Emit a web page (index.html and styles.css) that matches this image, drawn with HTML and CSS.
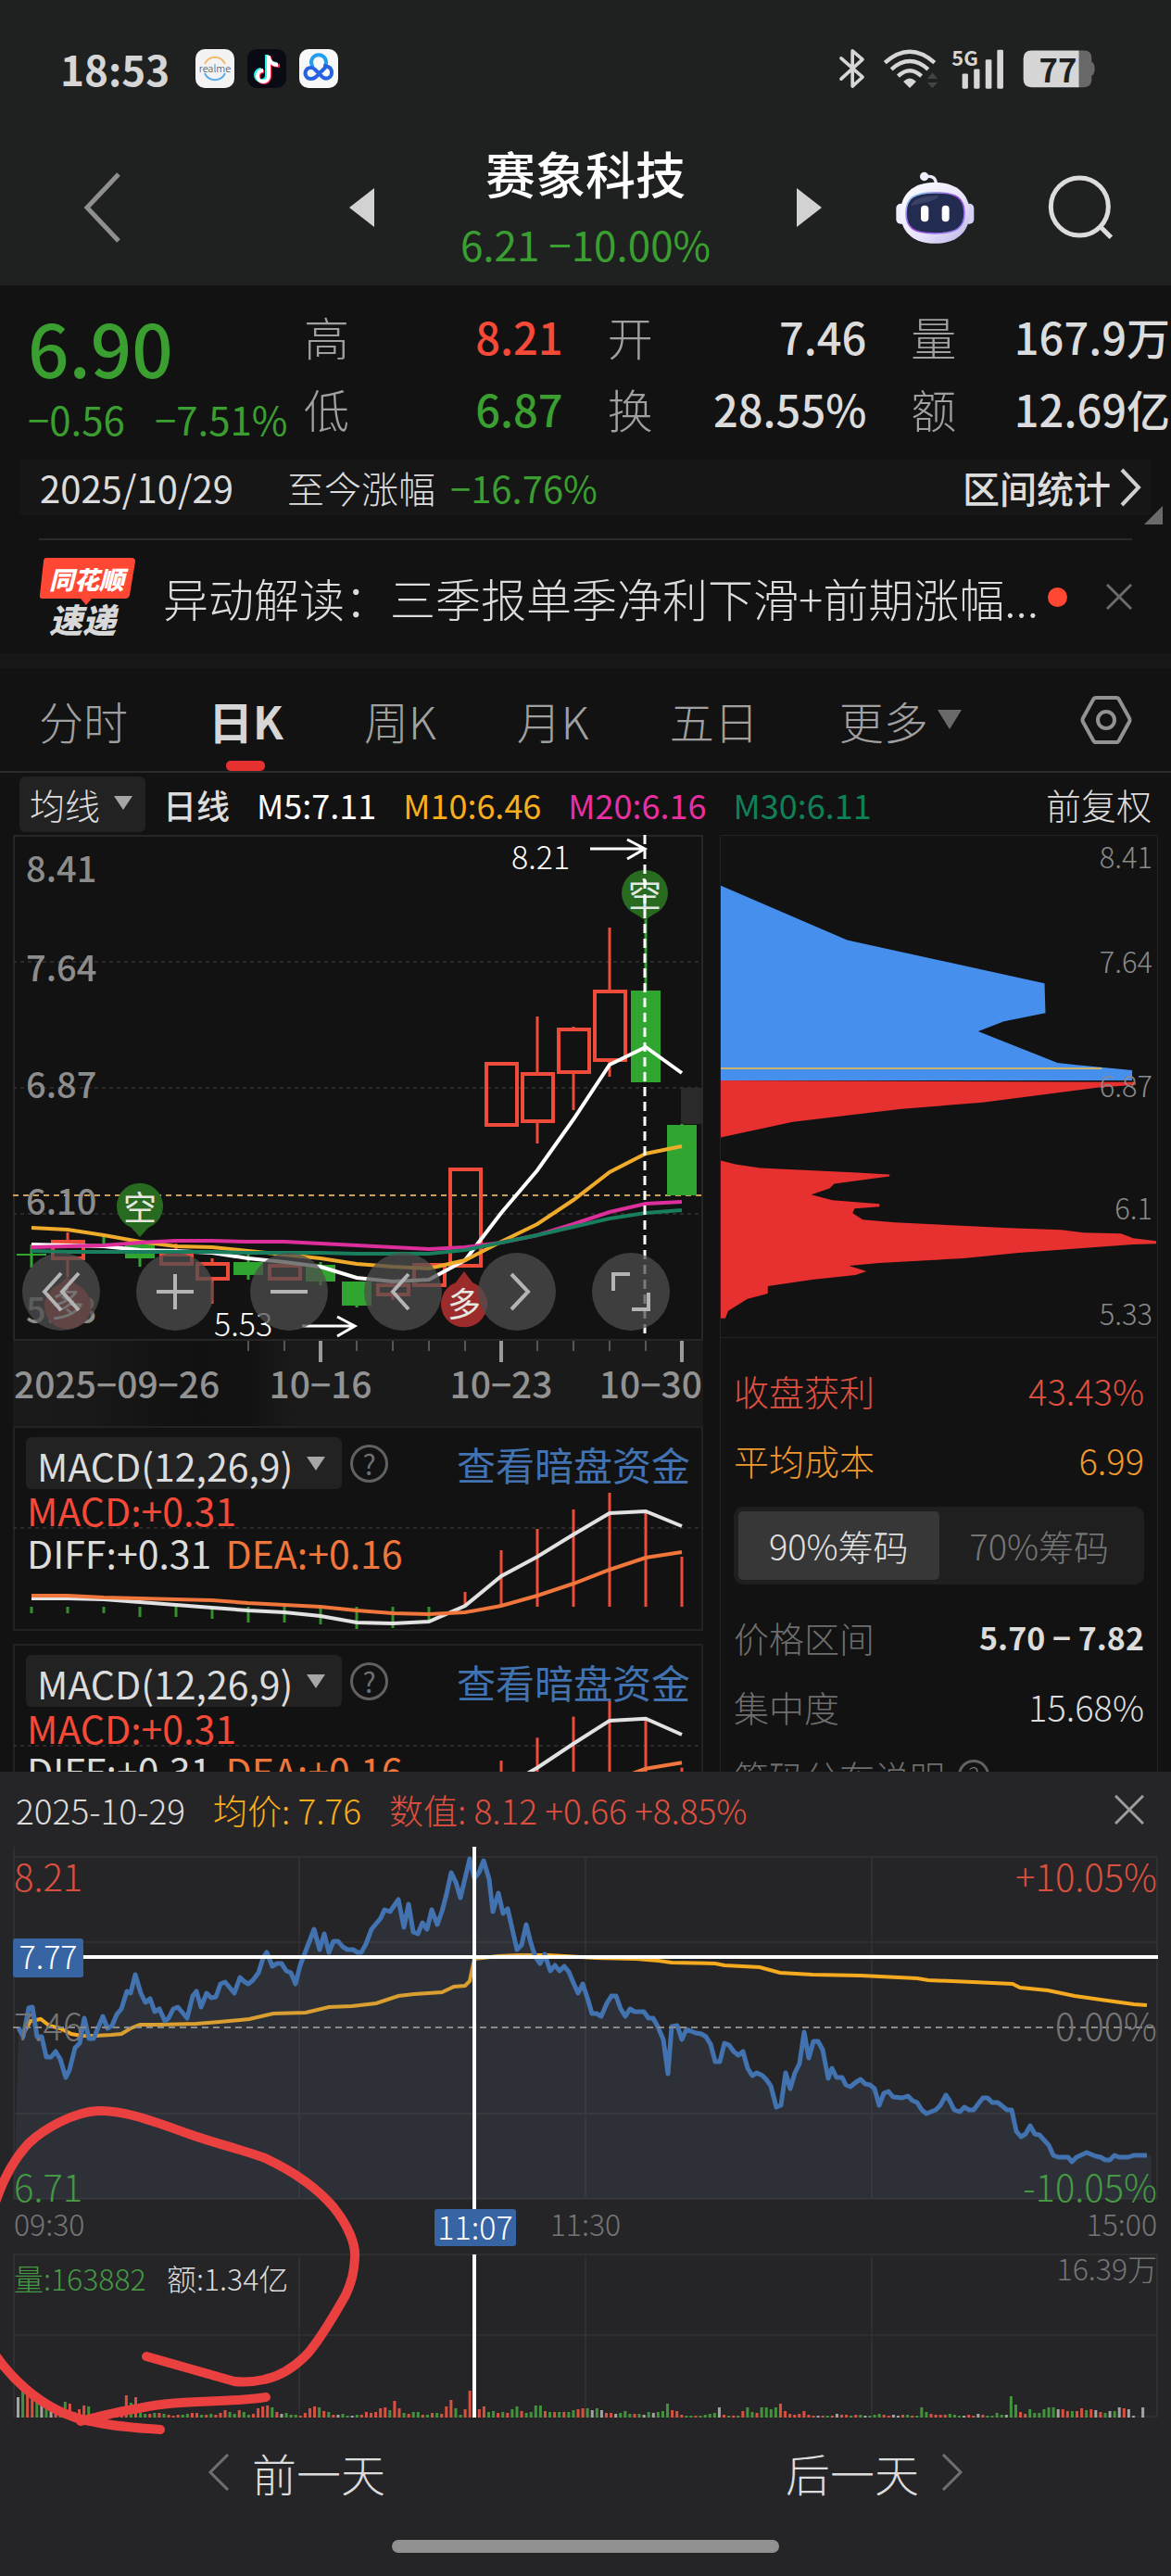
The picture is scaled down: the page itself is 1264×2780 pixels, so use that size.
FILE: index.html
```html
<!DOCTYPE html>
<html lang="zh-CN">
<head>
    <meta charset="UTF-8">
    <meta name="viewport" content="width=device-width, initial-scale=1.0">
    <title>赛象科技</title>
    <link rel="stylesheet" href="styles.css">
</head>
<body>
    <header class="top">
        <div class="status">
            <span class="clock">18:53</span>
            <svg class="app" viewBox="0 0 42 42">
                <rect width="42" height="42" rx="10" fill="#f3f3f3"/>
                <path d="M10 16a12 12 0 0 1 22 0" fill="none" stroke="#f0bd72" stroke-width="2"/>
                <path d="M10 26a12 12 0 0 0 22 0" fill="none" stroke="#62aee8" stroke-width="2"/>
                <text x="21" y="25" class="app-text">realme</text>
            </svg>
            <svg class="app" viewBox="0 0 42 42">
                <rect width="42" height="42" rx="10" fill="#0a0a14"/>
                <g fill="none" stroke-width="4">
                    <path d="M21 6v22a6 6 0 1 1-6-6M21 8c1 5 5 8 11 8" stroke="#25f4ee"/>
                    <path d="M24 8v22a6 6 0 1 1-6-6M24 10c1 5 5 8 11 8" stroke="#fe2c55"/>
                    <path d="M23 7v22a6 6 0 1 1-6-6M23 9c1 5 5 8 10 8" stroke="#fff"/>
                </g>
            </svg>
            <svg class="app" viewBox="0 0 42 42">
                <rect width="42" height="42" rx="10" fill="#f8f8f8"/>
                <g fill="none" stroke-width="4" stroke-linecap="round">
                    <path d="M14 18a8 8 0 1 1 14 0" stroke="#22a0ee"/>
                    <path d="M28 18c5 1 7 4 7 7a6 6 0 0 1-10 5l-8-8a6 6 0 1 0-4 10c3 0 4-1 5-2l10-10" stroke="#2563e0"/>
                </g>
            </svg>
            <span class="spacer"></span>
            <svg width="27" height="44" viewBox="46 36 82 132">
                <path d="M52 68l70 62-33 30V44l33 28-70 64" fill="none" stroke="#d5d6d5" stroke-width="11" stroke-linejoin="round" stroke-linecap="round"/>
            </svg>
            <svg class="wifi" width="60" height="43" viewBox="184 36 180 130">
                <g fill="none" stroke="#d5d6d5" stroke-width="13">
                    <path d="M190 80q81-72 162 0"/>
                    <path d="M211 102q60-53 120 0"/>
                    <path d="M233 124q38-36 76 0"/>
                </g>
                <path d="M250 142q21-22 42 0l-21 21z" fill="#d5d6d5"/>
                <path d="M345 113l17 20h-34zM345 163l17-18h-34z" fill="#444"/>
            </svg>
            <svg class="signal" width="57" height="43" viewBox="412 36 170 130">
                <text x="412" y="91" class="net-text">5G</text>
                <g fill="#d5d6d5">
                    <rect x="446" y="116" width="19" height="49" rx="4"/>
                    <rect x="484" y="101" width="19" height="64" rx="4"/>
                    <rect x="522" y="70" width="20" height="95" rx="4"/>
                    <rect x="560" y="38" width="20" height="127" rx="4"/>
                </g>
            </svg>
            <svg class="battery" width="78" height="41" viewBox="640 44 234 122">
                <path d="M822 45h16q25 0 25 25v12q10 4 10 22t-10 22v13q0 25-25 25h-16z" fill="#686868"/>
                <path d="M822 45H668q-26 0-26 26v67q0 26 26 26h154z" fill="#d5d6d5"/>
                <text x="754" y="148" class="battery-text">77</text>
            </svg>
        </div>
        <div class="titlebar">
            <button class="icon-btn back" aria-label="返回">
                <svg width="41" height="76" viewBox="0 0 41 76"><path d="M38 2L4 38l34 36" fill="none" stroke="#8f8f8f" stroke-width="5"/></svg>
            </button>
            <div class="switcher">
                <button class="icon-btn" aria-label="上一只"><svg width="27" height="42" viewBox="0 0 27 42"><path d="M27 0v42L0 21z" fill="#d2d2d2"/></svg></button>
                <div class="stock">
                    <h1>赛象科技</h1>
                    <p class="green">6.21 −10.00%</p>
                </div>
                <button class="icon-btn" aria-label="下一只"><svg width="27" height="42" viewBox="0 0 27 42"><path d="M0 0v42l27-21z" fill="#d2d2d2"/></svg></button>
            </div>
            <div class="actions">
                <button class="icon-btn" aria-label="助手">
                    <svg width="85" height="79" viewBox="230 424 255 236">
                        <defs>
                            <linearGradient id="shell" x1="0" y1="0" x2="1" y2="1"><stop offset="0" stop-color="#fff"/><stop offset=".6" stop-color="#e6e2fa"/><stop offset="1" stop-color="#b9b2e6"/></linearGradient>
                            <linearGradient id="rim" x1="0" y1="0" x2="1" y2="1"><stop offset="0" stop-color="#8fe6f5"/><stop offset=".5" stop-color="#a04be0"/><stop offset="1" stop-color="#8b8cf5"/></linearGradient>
                        </defs>
                        <path d="M322 441q38-8 38 24" fill="none" stroke="#e9e8f8" stroke-width="10"/>
                        <circle cx="322" cy="440" r="14" fill="#eeeefa"/>
                        <rect x="231" y="528" width="34" height="66" rx="15" fill="#eeedfa"/>
                        <rect x="449" y="528" width="34" height="66" rx="15" fill="#d5d1f2"/>
                        <path d="M357 459c75 0 112 42 112 99s-37 99-112 99-112-42-112-99 37-99 112-99z" fill="url(#shell)"/>
                        <path d="M357 492c70 0 95 18 95 66s-25 66-95 66-94-18-94-66 24-66 94-66z" fill="#222b50" stroke="url(#rim)" stroke-width="5"/>
                        <path d="M280 535c5-25 40-33 90-33-15 22-50 20-90 33z" fill="#4b5375" opacity=".6"/>
                        <rect x="311" y="534" width="25" height="52" rx="12" fill="#fff"/>
                        <rect x="379" y="534" width="24" height="52" rx="12" fill="#fff"/>
                    </svg>
                </button>
                <button class="icon-btn" aria-label="搜索">
                    <svg width="71" height="70" viewBox="720 445 213 210"><g fill="none" stroke="#dcdcdc" stroke-width="15"><circle cx="823" cy="547" r="93"/><path d="M889 611l36 36"/></g></svg>
                </button>
            </div>
        </div>
    </header>

    <section class="quote">
        <div class="last green">
            <strong>6.90</strong>
            <p><span>−0.56</span><span>−7.51%</span></p>
        </div>
        <dl class="stats">
            <div><dt>高</dt><dd class="red">8.21</dd></div>
            <div><dt>开</dt><dd>7.46</dd></div>
            <div><dt>量</dt><dd>167.9万</dd></div>
            <div><dt>低</dt><dd class="green">6.87</dd></div>
            <div><dt>换</dt><dd>28.55%</dd></div>
            <div><dt>额</dt><dd>12.69亿</dd></div>
        </dl>
    </section>

    <section class="period">
        <span>2025/10/29</span>
        <span class="since">至今涨幅</span>
        <span class="green">−16.76%</span>
        <button class="range-btn">区间统计
            <svg width="24" height="42" viewBox="0 0 24 42"><path d="M2 2l18 19L2 40" fill="none" stroke="#d0d0d0" stroke-width="4"/></svg>
        </button>
        <i class="corner"></i>
    </section>

    <section class="news">
        <svg width="104" height="84" viewBox="0 0 104 84">
            <path d="M8 0h92q4 0 4 4l-6 36q-1 4-5 4H57l-6 7-6-7H4q-4 0-3-4L5 4q0-4 3-4z" fill="#ff4733"/>
            <text x="11" y="34" class="badge-top">同花顺</text>
            <text x="11" y="81" class="badge-bottom">速递</text>
        </svg>
        <a href="#">异动解读：三季报单季净利下滑+前期涨幅...</a>
        <i class="dot"></i>
        <button class="icon-btn" aria-label="关闭"><svg width="28" height="28" viewBox="0 0 28 28"><path d="M1 1l26 26M27 1L1 27" stroke="#6a6a6a" stroke-width="3"/></svg></button>
    </section>

    <nav class="tabs">
        <button>分时</button>
        <button class="active">日K</button>
        <button>周K</button>
        <button>月K</button>
        <button>五日</button>
        <button class="more">更多<i class="caret"></i></button>
        <button class="settings" aria-label="设置">
            <svg width="56" height="54" viewBox="0 0 56 54"><g fill="none" stroke="#929292" stroke-width="4"><path d="M17 3h22q2 0 3 2l11 20q1 2 0 4L42 49q-1 2-3 2H17q-2 0-3-2L3 29q-1-2 0-4L14 5q1-2 3-2z"/><circle cx="28" cy="27" r="9"/></g></svg>
        </button>
    </nav>

    <div class="ma-row">
        <label class="picker ma-picker"><select aria-label="指标"><option>均线</option></select></label>
        <b>日线</b>
        <span class="m5">M5:7.11</span>
        <span class="m10">M10:6.46</span>
        <span class="m20">M20:6.16</span>
        <span class="m30">M30:6.11</span>
        <button>前复权</button>
    </div>

    <main class="market">
        <div class="left">
            <div class="kline">
                <svg id="kline" viewBox="14 901 745 638">
                    <defs>
                        <linearGradient id="strip">
                            <stop offset="0" stop-color="#1a1a1a"/><stop offset=".1" stop-color="#191919"/>
                            <stop offset=".26" stop-color="#111"/><stop offset=".34" stop-color="#121212"/><stop offset=".41" stop-color="#1a1a1a"/>
                        </linearGradient>
                    </defs>
                    <rect x="14" y="1446" width="745" height="93" fill="url(#strip)"/>
                    <rect x="15" y="902" width="743" height="544" class="frame"/>
                    <path d="M14 1038h745M14 1174h745M14 1310h745" class="grid-dash"/>
                    <path d="M14 1290h745" class="now-dash"/>
                    <g class="k-label">
                        <text x="28" y="952">8.41</text>
                        <text x="28" y="1059">7.64</text>
                        <text x="28" y="1185">6.87</text>
                        <text x="28" y="1311">6.10</text>
                        <text x="28" y="1428">5.33</text>
                    </g>
                    <rect x="735" y="1174" width="24" height="39" fill="#2a2a2a"/>
                    <g id="candles"></g>
                    <g id="averages"></g>
                    <g class="marks">
                        <path d="M696 993l-9-6a25 25 0 1 1 18 0z" fill="#286a20"/>
                        <text x="696" y="979">空</text>
                        <path d="M151 1335l-9-10a25 25 0 1 1 18 0z" fill="#286a20"/>
                        <text x="151" y="1317">空</text>
                        <path d="M501 1372l-9 12a25 25 0 1 0 18 0z" fill="#9c2b2b"/>
                        <text x="501" y="1421">多</text>
                        <path d="M73 1378l-9 8a25 25 0 1 0 18 0z" fill="#9c2b2b"/>
                        <text x="73" y="1421">多</text>
                    </g>
                    <path d="M696 901v543" class="cross-dash"/>
                    <g class="arrow">
                        <text x="552" y="938">8.21</text>
                        <path d="M637 916h58M677 906l19 10-19 11"/>
                        <text x="231" y="1442">5.53</text>
                        <path d="M326 1431h57M364 1421l19 10-19 11"/>
                    </g>
                    <g id="ticks"></g>
                    <g class="k-date">
                        <text x="15" y="1509">2025−09−26</text>
                        <text x="346" y="1509" text-anchor="middle">10−16</text>
                        <text x="541" y="1509" text-anchor="middle">10−23</text>
                        <text x="758" y="1509" text-anchor="end">10−30</text>
                    </g>
                </svg>
                <div class="tools">
                    <button aria-label="最前"><svg viewBox="0 0 84 84"><path d="M42 22L24 42l18 20M61 22L43 42l18 20"/></svg></button>
                    <button aria-label="放大"><svg viewBox="0 0 84 84"><path d="M22 42h40M42 23v38"/></svg></button>
                    <button aria-label="缩小"><svg viewBox="0 0 84 84"><path d="M22 42h40"/></svg></button>
                    <button aria-label="左移"><svg viewBox="0 0 84 84"><path d="M48 23L31 42l17 19"/></svg></button>
                    <button aria-label="右移"><svg viewBox="0 0 84 84"><path d="M36 23l18 19-18 19"/></svg></button>
                    <button aria-label="全屏"><svg viewBox="0 0 84 84"><path d="M23 41V23h18M61 43v18H43"/></svg></button>
                </div>
            </div>

            <section class="macd">
                <svg id="macd1" viewBox="0 0 745 221"></svg>
                <div class="macd-info">
                    <div class="macd-head">
                        <label class="picker"><select aria-label="副图指标"><option>MACD(12,26,9)</option></select></label>
                        <button class="help">?</button>
                        <a href="#">查看暗盘资金</a>
                    </div>
                    <p class="red">MACD:+0.31</p>
                    <p>DIFF:+0.31 <span class="dea">DEA:+0.16</span></p>
                </div>
            </section>
            <section class="macd">
                <svg id="macd2" viewBox="0 0 745 221"></svg>
                <div class="macd-info">
                    <div class="macd-head">
                        <label class="picker"><select aria-label="副图指标"><option>MACD(12,26,9)</option></select></label>
                        <button class="help">?</button>
                        <a href="#">查看暗盘资金</a>
                    </div>
                    <p class="red">MACD:+0.31</p>
                    <p>DIFF:+0.31 <span class="dea">DEA:+0.16</span></p>
                </div>
            </section>
        </div>

        <aside class="chips">
            <svg viewBox="0 0 473 543">
                <polygon fill="#468fed" points="0,54 137,113 351,160 352,192 307,201 279,212 365,246 383,248 446,254 446,265 0,265"/>
                <polygon fill="#e73030" points="0,265 450,267 450,270 408,273 284,289 196,296 78,310 0,327"/>
                <polygon fill="#e73030" points="0,352 16,356 43,360 148,365 183,367 183,369 123,377 118,382 98,389 121,395 172,399 172,402 145,404 143,409 154,416 189,419 313,425 369,427 393,430 434,431 447,436 472,439 472,442 447,443 323,452 263,458 172,463 139,466 158,472 146,476 99,481 51,488 51,496 29,502 8,515 5,523 0,523"/>
                <path d="M0 252h413" stroke="#cdb46e" stroke-width="2"/>
                <g class="chip-label">
                    <text x="468" y="35">8.41</text>
                    <text x="468" y="149">7.64</text>
                    <text x="468" y="283">6.87</text>
                    <text x="468" y="416">6.1</text>
                    <text x="468" y="530">5.33</text>
                </g>
            </svg>
            <div class="chip-info">
                <p class="row soft-red"><span>收盘获利</span><span>43.43%</span></p>
                <p class="row orange"><span>平均成本</span><span>6.99</span></p>
                <div class="toggle">
                    <button class="on">90%筹码</button>
                    <button>70%筹码</button>
                </div>
                <p class="row"><span class="dim">价格区间</span><b>5.70 − 7.82</b></p>
                <p class="row"><span class="dim">集中度</span><span>15.68%</span></p>
                <p class="row note"><span class="dim">筹码分布说明</span><span class="help small">?</span></p>
            </div>
        </aside>
    </main>

    <section class="sheet">
        <header class="sheet-head">
            <span>2025-10-29</span>
            <span class="m10">均价: 7.76</span>
            <span class="soft-red">数值: 8.12 +0.66 +8.85%</span>
            <button class="icon-btn" aria-label="关闭"><svg width="32" height="32" viewBox="0 0 32 32"><path d="M1 1l30 30M31 1L1 31" stroke="#9c9c9c" stroke-width="3"/></svg></button>
        </header>
        <svg id="intraday" viewBox="0 83 1264 616">
            <g class="grid-line">
                <path d="M14 94h1236M14 186h1236M14 371h1236M14 463h1236M14 523h1236M14 610h1236M14 698h1236"/>
                <path d="M15 83v380M323 94v369M632 94v369M941 94v369M1249 94v369M15 523v176M323 523v176M632 523v176M941 523v176M1249 523v176"/>
            </g>
            <g id="minutes"></g>
            <g id="volumes"></g>
            <path d="M14 278h1236" stroke="#8a8a8a" stroke-width="2" stroke-dasharray="7 5"/>
            <g class="i-label">
                <text x="15" y="131" fill="#d9503f">8.21</text>
                <text x="15" y="292" fill="#757575">7.46</text>
                <text x="15" y="466" fill="#459844">6.71</text>
                <text x="1249" y="131" fill="#d9503f" text-anchor="end">+10.05%</text>
                <text x="1249" y="292" fill="#757575" text-anchor="end">0.00%</text>
                <text x="1249" y="466" fill="#459844" text-anchor="end">-10.05%</text>
            </g>
            <path d="M14 202h1236M512 83v391M512 523v176" stroke="#fff" stroke-width="4"/>
            <g class="i-time">
                <text x="15" y="503">09:30</text>
                <text x="632" y="503" text-anchor="middle">11:30</text>
                <text x="1249" y="503" text-anchor="end">15:00</text>
                <text x="1249" y="551" text-anchor="end">16.39万</text>
                <text x="15" y="562" fill="#459844">量:163882</text>
                <text x="180" y="562" fill="#dcdcdc">额:1.34亿</text>
            </g>
            <rect x="14" y="182" width="76" height="42" rx="3" fill="#3765a3"/>
            <rect x="469" y="474" width="88" height="40" rx="3" fill="#3765a3"/>
            <g class="tip">
                <text x="52" y="215">7.77</text>
                <text x="513" y="507">11:07</text>
            </g>
        </svg>
        <nav class="days">
            <button><svg width="24" height="40" viewBox="0 0 24 40"><path d="M22 1L3 20l19 19"/></svg>前一天</button>
            <button>后一天<svg width="24" height="40" viewBox="0 0 24 40"><path d="M2 1l19 19L2 39"/></svg></button>
        </nav>
        <div class="home"></div>
        <svg class="scribble" viewBox="0 1912 1264 868">
            <path d="M-4 2374C6 2345 17 2328 31 2313C48 2297 80 2279 106 2278C135 2277 170 2291 204 2303C235 2314 262 2320 286 2329C318 2344 343 2362 360 2382C376 2402 384 2422 383 2436C382 2452 380 2462 373 2477C360 2500 347 2522 333 2539C317 2556 300 2565 285 2568C272 2571 262 2571 253 2570L158 2543"/>
            <path d="M-4 2543C15 2570 40 2590 60 2600C75 2608 90 2612 103 2614C125 2619 148 2620 173 2622"/>
            <path d="M87 2613C110 2607 130 2602 150 2599C195 2589 240 2594 287 2587"/>
        </svg>
    </section>
    <script src="script.js"></script>
</body>
</html>
```

FILE: styles.css
```css
* {
    box-sizing: border-box;
}

body {
    margin: 0;
    background-color: #121212;
    color: #dcdcdc;
    font-family: "Noto Sans CJK SC", "Noto Sans", sans-serif;
    font-size: 38px;
    font-weight: 300;
}

h1, p, dl, dd {
    margin: 0;
}

svg {
    display: block;
    flex: none;
}

svg text {
    font-family: "Noto Sans CJK SC", "Noto Sans", sans-serif;
}

button, select {
    padding: 0;
    border: none;
    background: none;
    color: inherit;
    font: inherit;
    cursor: pointer;
}

a {
    color: inherit;
    text-decoration: none;
}

.green {
    color: #3a9e30;
}

.red {
    color: #f64a38;
}

.soft-red {
    color: #e0503f;
}

.orange {
    color: #f0982d;
}

.dim {
    color: #6e6e6e;
}

.spacer {
    flex: 1;
}

/* Status bar and title */
.top {
    background-color: #1f2120;
    height: 308px;
}

.status {
    display: flex;
    align-items: center;
    gap: 14px;
    height: 148px;
    padding: 0 82px 0 65px;
}

.status svg {
    overflow: visible;
}

.clock {
    margin-right: 14px;
    color: #d5d6d5;
    font-size: 44px;
    font-weight: 700;
    line-height: 56px;
}

.app {
    width: 42px;
    height: 42px;
}

.app-text {
    font-size: 11px;
    text-anchor: middle;
    fill: #333;
}

.net-text {
    font-size: 66px;
    font-weight: 700;
    fill: #d5d6d5;
}

.battery-text {
    font-size: 104px;
    font-weight: 700;
    text-anchor: middle;
    fill: #1f2120;
}

.wifi, .battery {
    margin-left: 6px;
}

.titlebar {
    display: grid;
    grid-template-columns: 1fr 510px 1fr;
    align-items: center;
    height: 152px;
}

.icon-btn {
    display: block;
}

.back {
    margin-left: 90px;
}

.switcher, .actions {
    display: flex;
    align-items: center;
    justify-content: space-between;
}

.actions {
    padding: 0 62px 0 80px;
}

.stock {
    text-align: center;
}

.stock h1 {
    color: #fff;
    font-size: 54px;
    font-weight: 500;
    line-height: 78px;
}

.stock p {
    font-size: 44px;
    font-weight: 400;
    line-height: 74px;
}

/* Quote */
.quote {
    display: grid;
    grid-template-columns: 298px 1fr;
    padding: 16px 1px 16px 30px;
}

.last strong {
    display: block;
    font-size: 78px;
    font-weight: 500;
    line-height: 100px;
}

.last p {
    display: flex;
    gap: 32px;
    font-size: 42px;
    font-weight: 400;
    line-height: 56px;
}

.stats {
    display: grid;
    grid-template-columns: repeat(3, 1fr);
    column-gap: 48px;
}

.stats div {
    display: flex;
    justify-content: space-between;
    align-items: center;
    height: 77px;
}

.stats dt {
    color: #a0a0a0;
    font-size: 49px;
}

.stats dd {
    font-size: 47px;
    font-weight: 500;
}

.period {
    position: relative;
    display: flex;
    align-items: center;
    height: 60px;
    margin: 0 21px 25px;
    padding: 0 10px 0 22px;
    border-radius: 4px;
    background-color: #161616;
    font-weight: 400;
    font-size: 40px;
}

.since {
    margin: 0 16px 0 58px;
    font-weight: 300;
}

.range-btn {
    display: flex;
    align-items: center;
    gap: 10px;
    margin-left: auto;
    font-weight: 500;
}

.corner {
    position: absolute;
    right: -12px;
    bottom: -10px;
    border: 10px solid transparent;
    border-right-color: #6a6a6a;
    border-bottom-color: #6a6a6a;
}

.news {
    display: flex;
    align-items: center;
    height: 124px;
    margin: 0 42px;
    border-top: 2px solid #2b2b2b;
}

.news a {
    flex: 1;
    margin-left: 30px;
    font-size: 49px;
    white-space: nowrap;
}

.badge-top {
    font-size: 27px;
    font-weight: 900;
    font-style: italic;
    fill: #fff;
}

.badge-bottom {
    font-size: 36px;
    font-weight: 900;
    font-style: italic;
    fill: #d8d8d8;
}

.dot {
    width: 21px;
    height: 21px;
    margin-right: 42px;
    border-radius: 50%;
    background-color: #ff4733;
}

/* Tabs */
.tabs {
    display: flex;
    align-items: center;
    gap: 87px;
    height: 129px;
    padding: 0 42px;
    border-top: 16px solid #171717;
    border-bottom: 2px solid #2b2b2b;
    color: #a0a0a0;
    font-size: 48px;
}

.tabs button {
    position: relative;
    line-height: 110px;
}

.tabs .active {
    color: #d6d6d6;
    font-weight: 700;
}

.tabs .active::after {
    content: "";
    position: absolute;
    left: 50%;
    bottom: 0;
    width: 42px;
    height: 11px;
    margin-left: -21px;
    border-radius: 5px;
    background-color: #e73030;
}

.more {
    display: flex;
    align-items: center;
    gap: 10px;
}

.caret {
    border: 13px solid transparent;
    border-top: 21px solid #6a6a6a;
    border-bottom: none;
}

.tabs .settings {
    margin-left: auto;
}

.ma-row {
    display: flex;
    align-items: center;
    gap: 29px;
    height: 67px;
    padding: 0 21px;
    font-size: 36px;
    font-weight: 400;
}

.ma-row b {
    margin-left: -10px;
    font-weight: 500;
}

.ma-row button {
    margin-left: auto;
    font-size: 38px;
    font-weight: 300;
}

.picker {
    position: relative;
    display: block;
    height: 56px;
    border-radius: 6px;
    background-color: #222;
}

.picker::after {
    content: "";
    position: absolute;
    right: 18px;
    top: 21px;
    border: 10px solid transparent;
    border-top: 15px solid #a6a6a6;
    border-bottom: none;
    pointer-events: none;
}

.picker select {
    appearance: none;
    height: 100%;
    padding: 0 52px 0 12px;
    line-height: 56px;
    outline: none;
}

.ma-picker {
    height: 60px;
}

.ma-picker::after {
    right: 14px;
}

.ma-picker select {
    padding: 0 48px 0 11px;
    font-size: 38px;
    font-weight: 300;
}

.m5 {
    color: #fff;
}

.m10 {
    color: #f9ae1c;
}

.m20 {
    color: #ea2fa2;
}

.m30 {
    color: #108058;
}

/* Chart area, runs on beneath the sheet */
.market {
    display: grid;
    grid-template-columns: 745fr 473fr;
    gap: 18px;
    height: 1011px;
    padding: 0 14px;
    overflow: hidden;
}

.kline {
    position: relative;
}

.frame {
    fill: none;
    stroke: #262626;
    stroke-width: 2;
}

.grid-dash {
    stroke: #2b2b2b;
    stroke-width: 2;
    stroke-dasharray: 4 4;
}

.now-dash {
    stroke: #c9a15c;
    stroke-width: 2;
    stroke-dasharray: 6 5;
}

.cross-dash {
    stroke: #fff;
    stroke-width: 3;
    stroke-dasharray: 10 6;
}

.k-label {
    font-size: 38px;
    font-weight: 500;
    fill: #8c8c8c;
}

.k-date {
    font-size: 39px;
    font-weight: 500;
    fill: #929292;
}

.marks {
    font-size: 36px;
    font-weight: 400;
    text-anchor: middle;
}

.marks text {
    fill: #e4e8e0;
}

.arrow {
    font-size: 34px;
    fill: #fff;
}

.arrow path {
    fill: none;
    stroke: #fff;
    stroke-width: 3;
}

.tools {
    position: absolute;
    left: 10px;
    top: 451px;
    display: flex;
    gap: 39px;
}

.tools button {
    width: 84px;
    height: 84px;
    border-radius: 50%;
    background-color: rgba(78, 78, 78, 0.75);
}

.tools path {
    fill: none;
    stroke: #b4b4b4;
    stroke-width: 4;
}

.macd {
    display: grid;
    height: 221px;
    margin-bottom: 14px;
    border: 2px solid #222;
    font-size: 41px;
    font-weight: 400;
}

.macd > * {
    grid-area: 1 / 1;
}

.macd svg {
    width: calc(100% + 4px);
    margin: -2px;
}

.macd-info {
    padding: 11px 12px 0;
}

.macd-head {
    display: flex;
    align-items: center;
    gap: 9px;
    height: 54px;
}

.macd-head a {
    margin-left: auto;
    color: #4273b0;
    font-size: 42px;
}

.macd p {
    padding-left: 1px;
    line-height: 46px;
}

.dea {
    margin-left: 6px;
    color: #f0763c;
}

.help {
    width: 41px;
    height: 41px;
    border: 3px solid #616161;
    border-radius: 50%;
    color: #707070;
    font-size: 30px;
    line-height: 35px;
    text-align: center;
}

.small {
    width: 34px;
    height: 34px;
    font-size: 26px;
    line-height: 28px;
}

.chips {
    border: 1px solid #222;
}

.chip-label {
    font-size: 31px;
    text-anchor: end;
    fill: #8a8a8a;
}

.chip-info {
    padding: 19px 14px;
    border-top: 1px solid #222;
}

.row {
    display: flex;
    align-items: center;
    justify-content: space-between;
    height: 75px;
}

.row b {
    font-size: 34px;
    font-weight: 700;
}

.note {
    justify-content: flex-start;
    gap: 14px;
}

.toggle {
    display: flex;
    height: 84px;
    margin: 13px 0 19px;
    padding: 5px;
    border-radius: 10px;
    background-color: #1f1f1f;
}

.toggle button {
    flex: 1;
    border-radius: 5px;
    color: #757575;
}

.toggle .on {
    background-color: #373737;
    color: #e0e0e0;
}

/* Intraday sheet */
.sheet {
    position: relative;
    background-color: #252527;
    overflow: hidden;
}

.sheet-head {
    display: flex;
    align-items: center;
    gap: 30px;
    height: 81px;
    padding: 0 29px 0 17px;
    font-size: 37px;
}

.sheet-head button {
    margin-left: auto;
}

.grid-line {
    fill: none;
    stroke: #2f2f31;
    stroke-width: 2;
}

.i-label {
    font-size: 40px;
}

.i-time {
    font-size: 32px;
    fill: #757575;
}

.tip {
    font-size: 34px;
    text-anchor: middle;
    fill: #fff;
}

.days {
    display: flex;
    height: 118px;
    padding: 0 8px;
    font-size: 48px;
}

.days button {
    flex: 1;
    display: flex;
    align-items: center;
    justify-content: center;
    gap: 24px;
}

.days path {
    fill: none;
    stroke: #6f6f6f;
    stroke-width: 3;
}

.home {
    width: 33%;
    height: 14px;
    margin: 14px auto 25px;
    border-radius: 7px;
    background-color: #919191;
}

.scribble {
    position: absolute;
    left: 0;
    top: 0;
    width: 100%;
    pointer-events: none;
}

.scribble path {
    fill: none;
    stroke: #eb4040;
    stroke-width: 10;
    stroke-linecap: round;
    stroke-linejoin: round;
}
```

FILE: script.js
```javascript
const RED = '#ee4b3a';
const GREEN = '#30a530';
const X0 = 34;
const STEP = 39;

// high, body top, body bottom, low, colour
const candles = [
    [1343, 1353, 1355, 1368, 'g'], [1330, 1339, 1359, 1378, 'r'], [1334, 1343, 1345, 1347, 'g'],
    [1343, 1343, 1358, 1367, 'g'], [1342, 1353, 1365, 1365, 'r'], [1358, 1363, 1381, 1407, 'r'],
    [1352, 1362, 1376, 1381, 'g'], [1365, 1365, 1381, 1381, 'r'], [1362, 1365, 1383, 1387, 'g'],
    [1383, 1383, 1409, 1411, 'g'], [1386, 1386, 1398, 1403, 'r'], [1364, 1364, 1388, 1388, 'r'],
    [1261, 1261, 1367, 1367, 'r'], [1147, 1147, 1215, 1215, 'r'], [1097, 1158, 1211, 1234, 'r'],
    [1108, 1110, 1158, 1198, 'r'], [1001, 1069, 1145, 1162, 'r'], [985, 1069, 1168, 1168, 'g'],
    [1213, 1214, 1290, 1290, 'g']
];

const averages = {
    '#ffffff': [1343, 1344, 1345, 1349, 1350, 1352, 1358, 1362, 1367, 1379, 1383, 1381, 1360, 1309, 1263, 1208, 1149, 1130, 1158],
    '#f0ab2b': [1325, 1327, 1333, 1340, 1345, 1346, 1350, 1354, 1358, 1364, 1367, 1369, 1360, 1340, 1321, 1295, 1265, 1245, 1237],
    '#dd2f9c': [1346, 1345, 1344, 1341, 1339, 1339, 1340, 1340, 1342, 1344, 1346, 1348, 1346, 1341, 1333, 1321, 1308, 1299, 1297],
    '#187e5e': [1350, 1351, 1351, 1351, 1351, 1351, 1352, 1352, 1352, 1353, 1353, 1353, 1349, 1341, 1333, 1324, 1315, 1309, 1306]
};

let out = '';
candles.forEach(([high, top, bottom, low, c], i) => {
    const x = X0 + i * STEP;
    if (c === 'g') {
        out += `<path d="M${x} ${high}V${low}" stroke="${GREEN}" stroke-width="3"/>`;
        out += `<rect x="${x - 16}" y="${top}" width="32" height="${bottom - top}" fill="${GREEN}"/>`;
    } else {
        out += `<path d="M${x} ${high}V${top}M${x} ${bottom}V${low}" stroke="${RED}" stroke-width="3"/>`;
        out += `<rect x="${x - 16}" y="${top + 1}" width="33" height="${bottom - top - 2}" fill="none" stroke="${RED}" stroke-width="4"/>`;
    }
});
document.getElementById('candles').innerHTML = out;

out = '';
for (const color in averages) {
    const pts = averages[color].map((y, i) => `${X0 + i * STEP},${y}`).join(' ');
    out += `<polyline points="${pts}" fill="none" stroke="${color}" stroke-width="4"/>`;
}
document.getElementById('averages').innerHTML = out;

out = '';
for (let i = 6; i <= 18; i++) {
    const major = i % 5 === 3;
    out += `<path d="M${X0 + i * STEP} 1447v${major ? 23 : 11}" stroke="${major ? '#9a9a9a' : '#555'}" stroke-width="${major ? 4 : 2}"/>`;
}
document.getElementById('ticks').innerHTML = out;

// MACD panels, values measured from the zero line
const hist = [-7, -7, -7, -11, -11, -13, -17, -17, -19, -24, -23, -16, 16, 61, 84, 105, 123, 103, 54];
const diff = [9, 9, 8, 5, 2, -1, -4, -6, -10, -17, -18, -16, 1, 33, 54, 78, 101, 103, 87];
const dea = [12, 12, 10, 9, 8, 7, 4, 2, 0, -4, -7, -8, -6, 1, 12, 25, 40, 53, 59];

function drawMacd(id, zero, k) {
    const px = i => X0 - 14 + i * STEP;
    const line = (values, color) =>
        `<polyline points="${values.map((v, i) => `${px(i)},${zero - v * k}`).join(' ')}" fill="none" stroke="${color}" stroke-width="4"/>`;
    let s = '<path d="M0 110h745" class="grid-dash"/>';
    hist.forEach((v, i) => {
        s += `<path d="M${px(i)} ${zero}V${zero - v * k}" stroke="${v > 0 ? RED : '#358f2c'}" stroke-width="3"/>`;
    });
    document.getElementById(id).innerHTML = s + line(diff, '#e2e2e2') + line(dea, '#f0763c');
}
drawMacd('macd1', 195, 1);
drawMacd('macd2', 192, 1.08);

// Intraday price and average price
const price = '20,278 25,288 31,257 35,256 40,288 45,288 50,310 55,310 60,304 65,312 71,332 75,324 81,300 86,295 91,268 96,290 101,290 106,278 111,266 116,279 121,276 126,264 131,258 137,239 141,241 146,221 152,241 157,251 162,247 167,261 172,258 178,271 182,268 187,258 192,256 202,268 208,244 212,239 217,256 223,241 228,246 233,245 238,231 243,229 253,241 259,224 263,228 268,231 273,227 279,219 284,203 288,197 294,212 299,209 304,209 309,217 314,219 319,231 324,211 329,198 339,172 345,194 350,177 355,197 360,185 365,185 370,191 375,194 381,194 386,197 390,197 395,188 401,172 406,166 411,160 415,151 421,153 430,140 436,170 441,145 446,175 451,177 456,165 461,172 466,151 472,167 477,153 482,134 487,111 492,121 497,138 502,117 507,96 512,117 517,111 522,98 528,118 532,153 538,133 543,155 548,150 553,172 558,194 563,189 568,167 573,187 578,202 583,209 588,199 594,217 599,211 604,217 609,212 614,218 619,230 624,241 629,231 634,246 639,263 644,263 649,266 655,252 660,244 665,244 670,258 675,266 680,258 685,261 695,261 700,268 705,268 710,277 716,291 721,328 725,277 731,276 736,291 741,280 751,284 757,285 762,288 767,296 772,315 777,315 782,295 787,297 792,304 797,308 802,304 807,322 812,330 817,327 823,330 827,334 832,341 838,364 843,362 848,327 853,344 858,327 863,317 868,283 873,311 878,293 883,293 888,302 894,333 898,322 903,332 909,332 913,340 918,342 924,337 929,334 934,339 939,340 944,344 949,362 954,349 959,347 964,353 974,354 980,352 985,357 990,359 995,367 1000,371 1010,367 1015,362 1021,351 1025,357 1030,367 1036,369 1041,364 1046,367 1051,367 1057,359 1061,354 1066,354 1071,359 1077,359 1087,367 1092,367 1097,390 1102,396 1107,393 1112,384 1117,393 1122,394 1132,405 1137,416 1142,418 1153,418 1157,423 1162,418 1173,413 1183,417 1188,418 1193,421 1198,421 1203,416 1208,418 1218,418 1224,416 1238,416';
const avg = '20,280 25,285 33,271 44,269 53,276 65,279 77,285 88,287 102,287 120,286 131,285 141,279 151,275 171,275 212,274 237,272 269,269 295,263 330,262 355,256 380,255 406,252 430,244 447,242 477,240 490,234 502,233 507,228 512,204 538,201 559,200 592,200 644,203 687,204 711,206 725,208 772,209 782,211 820,213 842,219 877,221 929,222 990,225 1002,227 1050,229 1093,231 1101,235 1131,238 1160,244 1188,248 1224,253 1238,254';
document.getElementById('minutes').innerHTML =
    `<polyline points="${avg}" fill="none" stroke="#f5aa20" stroke-width="4"/>` +
    `<polygon points="15,463 20,278 ${price} 1243,416 1243,463" fill="#5b6b80" fill-opacity="0.17"/>` +
    `<polyline points="${price}" fill="none" stroke="#4273b0" stroke-width="5" stroke-linejoin="round"/>`;

// Minute volume, height and colour
const volume = '22w 30g 30r 28r 20g 15w 12g 9w 12r 6g 17g 15r 6g 9r 13r 12g 4r 3g 4r 8g 5r 6r 5r 24r 16g 22r 5g 4g 4r 5g 5r 4g 3r 2r 3r 3g 4g 5r 5r 3g 3r 4g 3r 5r 8r 6g 4g 8r 6g 3g 4r 10r 12r 13r 11g 6r 4w 5g 3g 3g 2r 5r 10r 12r 11g 7r 6g 3r 3w 4g 2g 2w 3g 3r 6r 5r 6r 10r 11r 8g 18r 10r 5g 4r 6g 6g 3r 3g 5r 5g 4r 12r 19r 10g 3g 9r 29r 0r 9r 12r 6g 7g 5r 6g 5r 9g 12g 7r 5g 6g 13g 13g 7r 6g 6r 6g 6r 6g 8g 9r 10r 10g 8w 10g 8w 5r 5r 4w 5g 7g 4g 4r 4g 3w 6g 5w 6g 7g 15g 8r 7r 3r 2g 2g 2r 2g 3g 4g 5g 11w 3r 2g 2r 2g 7r 11g 6g 5r 11g 11g 9g 11g 15r 7r 4r 3r 4r 7r 3r 2r 2w 2r 2g 2r 4w 3r 3r 2g 3r 3g 2w 2g 3g 4g 3r 2r 3w 2w 3r 3g 2r 2g 11g 6g 4r 3r 3r 3r 4g 3g 2g 2w 3r 2r 4w 3r 2g 2g 5g 3g 3w 23g 14g 6r 4r 9g 5g 5g 9g 11g 11g 9w 9r 7r 7g 7r 10r 8g 9r 8w 6r 5g 7w 7g 11w 10r 9w 2w 0w 11w';
const shades = { r: '#d9503f', g: '#41933c', w: '#a3a3a3' };
document.getElementById('volumes').innerHTML = volume.split(' ').map((v, i) => {
    const h = parseInt(v);
    return `<rect x="${18 + i * 5.08}" y="${699 - h}" width="3" height="${h}" fill="${shades[v.slice(-1)]}"/>`;
}).join('');
```
